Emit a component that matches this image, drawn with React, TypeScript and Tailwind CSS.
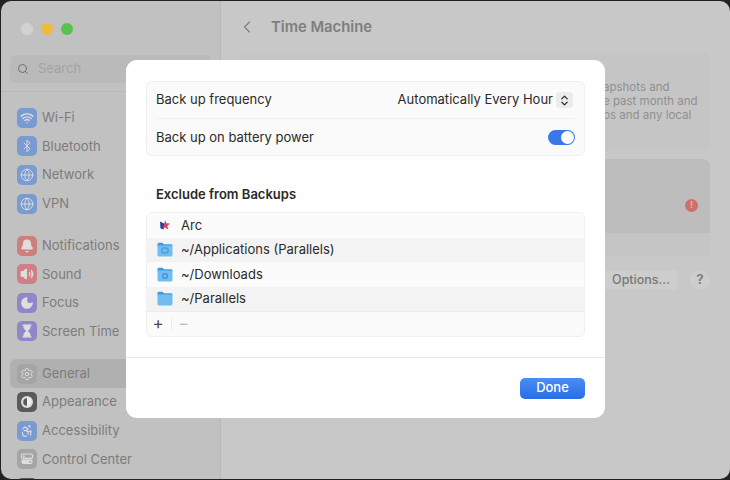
import {
  Accessibility, Bell, Bluetooth, ChevronLeft, ChevronsUpDown, Globe, Hourglass, Moon, Search, Settings, Volume2, Wifi,
} from "lucide-react";
import type { ReactNode } from "react";

const font = { fontFamily: "Inter, 'Noto Sans', sans-serif" };

const glyph = "h-[14px] w-[14px] text-[#dedede]";

function AppearanceGlyph() {
  return (
    <svg viewBox="0 0 14 14" className="h-[14px] w-[14px]">
      <circle cx="7" cy="7" r="6" fill="#dedede" />
      <path d="M7 3.2A3.8 3.8 0 0 0 7 10.8Z" fill="#5a5a5a" />
      <path d="M7 3.2A3.8 3.8 0 0 1 7 10.8Z" fill="#f2f2f2" />
    </svg>
  );
}

function ControlGlyph() {
  return (
    <svg viewBox="0 0 14 14" className="h-[14px] w-[14px]">
      <rect x="1.5" y="2" width="11" height="4.4" rx="1.4" fill="none" stroke="#dedede" strokeWidth="1.1" />
      <rect x="1.5" y="7.6" width="11" height="4.4" rx="1.4" fill="#dedede" />
      <circle cx="10.3" cy="9.8" r="1.1" fill="#a5a5a5" />
      <circle cx="3.8" cy="4.2" r="1" fill="#dedede" />
    </svg>
  );
}

type NavItem = { label?: string; icon: ReactNode; tile: string; active?: boolean };

const groups: NavItem[][] = [
  [
    { label: "Wi-Fi", icon: <Wifi className={glyph} strokeWidth={2.4} />, tile: "bg-[#7a9ad2]" },
    { label: "Bluetooth", icon: <Bluetooth className={glyph} strokeWidth={1.6} />, tile: "bg-[#7a9ad2]" },
    { label: "Network", icon: <Globe className={glyph} strokeWidth={1.6} />, tile: "bg-[#7a9ad2]" },
    { label: "VPN", icon: <Globe className={glyph} strokeWidth={1.6} />, tile: "bg-[#7a9ad2]" },
  ],
  [
    { label: "Notifications", icon: <Bell className={glyph} fill="#dedede" />, tile: "bg-[#cf7f7b]" },
    { label: "Sound", icon: <Volume2 className={glyph} fill="#dedede" />, tile: "bg-[#cf7f85]" },
    { label: "Focus", icon: <Moon className={glyph} fill="#dedede" />, tile: "bg-[#8f88c8]" },
    { label: "Screen Time", icon: <Hourglass className={glyph} fill="#dedede" />, tile: "bg-[#8f88c8]" },
  ],
  [
    { label: "General", icon: <Settings className={glyph} strokeWidth={1.6} />, tile: "bg-[#a5a5a5]", active: true },
    { label: "Appearance", icon: <AppearanceGlyph />, tile: "bg-[#5a5a5a]" },
    { label: "Accessibility", icon: <Accessibility className={glyph} />, tile: "bg-[#7a9ad2]" },
    { label: "Control Center", icon: <ControlGlyph />, tile: "bg-[#a5a5a5]" },
    { icon: null, tile: "bg-[#5a5a5a]" },
  ],
];

function Sidebar() {
  return (
    <aside className="flex h-full w-[220px] shrink-0 flex-col overflow-hidden border-r border-[#b8b8b8] bg-[#c1c1c1]">
      <div className="flex h-[54px] shrink-0 items-center gap-[8px] pl-[20px] pt-[1px]">
        <span className="h-[12px] w-[12px] rounded-full bg-[#d2d2d2]" />
        <span className="h-[12px] w-[12px] rounded-full bg-[#efbb3d]" />
        <span className="h-[12px] w-[12px] rounded-full bg-[#57c24f]" />
      </div>
      <div className="mx-[9px] flex h-[28px] shrink-0 items-center gap-[9px] rounded-md bg-[#bababa] pl-[7px]">
        <Search className="h-[12px] w-[12px] text-[#6f6f6f]" />
        <span className="text-[13px] text-[#a3a3a3]">Search</span>
      </div>
      <div className="mt-[8px] h-px shrink-0 bg-[#b9b9b9]" />
      <div className="flex flex-col gap-[13.5px] pt-[11.5px]">
        {groups.map((group, i) => (
          <div key={i} className="flex flex-col">
            {group.map((item, j) => (
              <div
                key={j}
                className={`mx-[9px] flex h-[28.6px] items-center gap-[5px] rounded-l-md pl-[7px] ${item.active ? "bg-[#b0b0b0]" : ""}`}
              >
                <span className={`flex h-[20px] w-[20px] items-center justify-center rounded-[5px] ${item.tile}`}>
                  {item.icon}
                </span>
                {item.label && <span className="text-[13px] text-[#7c7c7c]">{item.label}</span>}
              </div>
            ))}
          </div>
        ))}
      </div>
    </aside>
  );
}

function Main() {
  return (
    <main className="flex h-full min-w-0 flex-1 flex-col bg-[#c8c8c8] pl-[19px] pr-[20px]">
      <div className="flex h-[52px] shrink-0 items-center gap-[14px]">
        <ChevronLeft className="h-[20px] w-[20px] -translate-x-[3px] text-[#808080]" strokeWidth={1.5} />
        <span className="-translate-x-[3px] text-[14.8px] font-semibold text-[#7e7e7e]">Time Machine</span>
      </div>
      <div className="flex h-[98px] shrink-0 flex-col justify-center rounded-lg bg-[#c5c5c5] pb-[3px] pl-[363px] text-[11.5px] leading-[14px] text-[#8f8f8f]">
        <div className="whitespace-nowrap">apshots and</div>
        <div className="whitespace-nowrap">e past month and</div>
        <div className="whitespace-nowrap">bs and any local</div>
      </div>
      <div className="mt-[8px] flex h-[98px] shrink-0 flex-col overflow-hidden rounded-lg bg-[#c5c5c5]">
        <div className="flex h-[74px] items-center justify-end bg-[#bdbdbd] pr-[12px] pt-[18px]">
          <span className="flex h-[13px] w-[13px] items-center justify-center rounded-full bg-[#cf6f6a] text-[9px] font-bold text-[#e3b0ad]">!</span>
        </div>
      </div>
      <div className="mt-[13px] flex items-center justify-end gap-[12px]">
        <span className="flex h-[20px] w-[74px] items-center justify-center rounded-[5px] bg-[#cdcdcd] text-[12.5px] font-medium text-[#777777]">Options...</span>
        <span className="flex h-[20px] w-[20px] items-center justify-center rounded-full bg-[#cdcdcd] text-[13px] font-semibold text-[#777777]">?</span>
      </div>
    </main>
  );
}

function FolderIcon({ mark }: { mark?: "app" | "down" }) {
  return (
    <svg viewBox="0 0 16 15" className="h-[15px] w-[16px]">
      <path d="M0.5 2.2C0.5 1.3 1.1 0.7 2 0.7H5.5L7 2.2H14C14.9 2.2 15.5 2.8 15.5 3.7V4.5H0.5Z" fill="#3f9bde" />
      <rect x="0.5" y="3.6" width="15" height="10.8" rx="1.3" fill="#72bdf0" />
      {mark === "app" && <rect x="5" y="6" width="6" height="5" rx="1" fill="none" stroke="#3f8fd0" strokeWidth="1" />}
      {mark === "down" && <circle cx="8" cy="9" r="2.4" fill="none" stroke="#3f8fd0" strokeWidth="1.2" />}
    </svg>
  );
}

function ArcIcon() {
  return (
    <svg viewBox="0 0 12 12" className="h-[12px] w-[12px]">
      <path d="M1 2.5L6 5L4.5 10.5L1.5 9.5Z" fill="#2b3f9e" />
      <path d="M6 1L7.4 4.3L11 4.6L8.3 7L9.2 10.5L6 8.6L3.5 9.5L5 6Z" fill="#e0405a" />
    </svg>
  );
}

const excludes = [
  { label: "Arc", icon: <ArcIcon />, bg: "bg-[#fbfbfb]" },
  { label: "~/Applications (Parallels)", icon: <FolderIcon mark="app" />, bg: "bg-[#f3f3f3]" },
  { label: "~/Downloads", icon: <FolderIcon mark="down" />, bg: "bg-[#fbfbfb]" },
  { label: "~/Parallels", icon: <FolderIcon />, bg: "bg-[#f3f3f3]" },
];

function Modal() {
  return (
    <div className="absolute left-[126px] top-[60px] flex h-[358px] w-[479px] flex-col rounded-[11px] bg-white text-[#2a2a2a]">
      <div className="mx-[20px] mt-[21px] rounded-md border border-[#f0f0f0] bg-[#fafafa]">
        <div className="flex h-[36px] items-center justify-between pl-[9px] pr-[11px]">
          <span className="text-[13px]">Back up frequency</span>
          <div className="flex items-center gap-[3px]">
            <span className="text-[13px]">Automatically Every Hour</span>
            <span className="flex h-[16px] w-[17px] items-center justify-center rounded-[4px] bg-[#ececec]">
              <ChevronsUpDown className="h-[13px] w-[13px] text-[#222222]" strokeWidth={2.2} />
            </span>
          </div>
        </div>
        <div className="mx-[9px] h-px bg-[#f0f0f0]" />
        <div className="flex h-[36px] items-center justify-between pl-[9px] pr-[9px] pt-[1px]">
          <span className="text-[13px]">Back up on battery power</span>
          <span className="flex h-[15px] w-[27px] items-center justify-end rounded-full bg-[#3a78e8] pr-[1px]">
            <span className="h-[13px] w-[13px] rounded-full bg-white" />
          </span>
        </div>
      </div>

      <h2 className="ml-[30px] mt-[30px] text-[13px] leading-[16px] font-semibold">Exclude from Backups</h2>

      <div className="mx-[20px] mt-[10px] overflow-hidden rounded-md border border-[#f0f0f0] bg-[#fbfbfb]">
        {excludes.map((row) => (
          <div key={row.label} className={`flex h-[24.5px] items-center ${row.bg}`}>
            <span className="flex w-[34px] shrink-0 items-center justify-center pl-[2px]">{row.icon}</span>
            <span className="text-[13px]">{row.label}</span>
          </div>
        ))}
        <div className="flex h-[25px] items-center border-t border-[#ececec] text-[#4a4a4a]">
          <span className="flex w-[23px] items-center justify-center pb-[2px] pr-[1px] text-[17px] leading-none">+</span>
          <span className="ml-[1px] h-[14px] w-px bg-[#ececec]" />
          <span className="flex w-[23px] items-center justify-center pb-[2px] text-[16px] leading-none text-[#bdbdbd]">−</span>
        </div>
      </div>

      <div className="mt-[20px] h-px bg-[#e9e9e9]" />
      <div className="flex flex-1 items-center justify-end pr-[20px]">
        <button
          type="button"
          className="h-[21px] w-[65px] rounded-[5px] bg-gradient-to-b from-[#4a8df5] to-[#2a6de6] text-[13px] font-medium text-white"
        >
          Done
        </button>
      </div>
    </div>
  );
}

export default function App() {
  return (
    <div className="relative h-[480px] w-[730px] overflow-hidden bg-[#222222] pl-[1px] pt-[1px]" style={font}>
      <div className="flex h-[478px] w-[729px] overflow-hidden rounded-[10px]">
        <Sidebar />
        <Main />
      </div>
      <Modal />
    </div>
  );
}
